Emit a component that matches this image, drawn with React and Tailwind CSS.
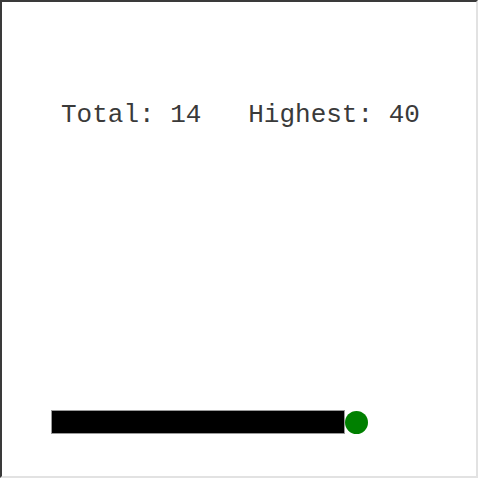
export default function App() {
  return (
    <div className="w-[478px] h-[478px] bg-white border-2 border-t-[#3a3a3a] border-l-[#3a3a3a] border-r-[#e2e2e2] border-b-[#e2e2e2] flex flex-col">
      <div
        className="pt-[100px] pl-[59px] text-[26px] leading-[26px] text-[#3a3a3a] whitespace-pre"
        style={{ fontFamily: '"Courier New", "Nimbus Mono PS", "Nimbus Mono L", FreeMono, Courier, "Liberation Mono", monospace' }}
      >
        {"Total: 14   Highest: 40"}
      </div>
      <div className="mt-auto pb-[42px] pl-[49px] flex items-center">
        <div className="w-[294px] h-[24px] bg-black border border-[#9a9a9a]" />
        <div className="w-[23px] h-[23px] rounded-full bg-[#008000]" />
      </div>
    </div>
  );
}
